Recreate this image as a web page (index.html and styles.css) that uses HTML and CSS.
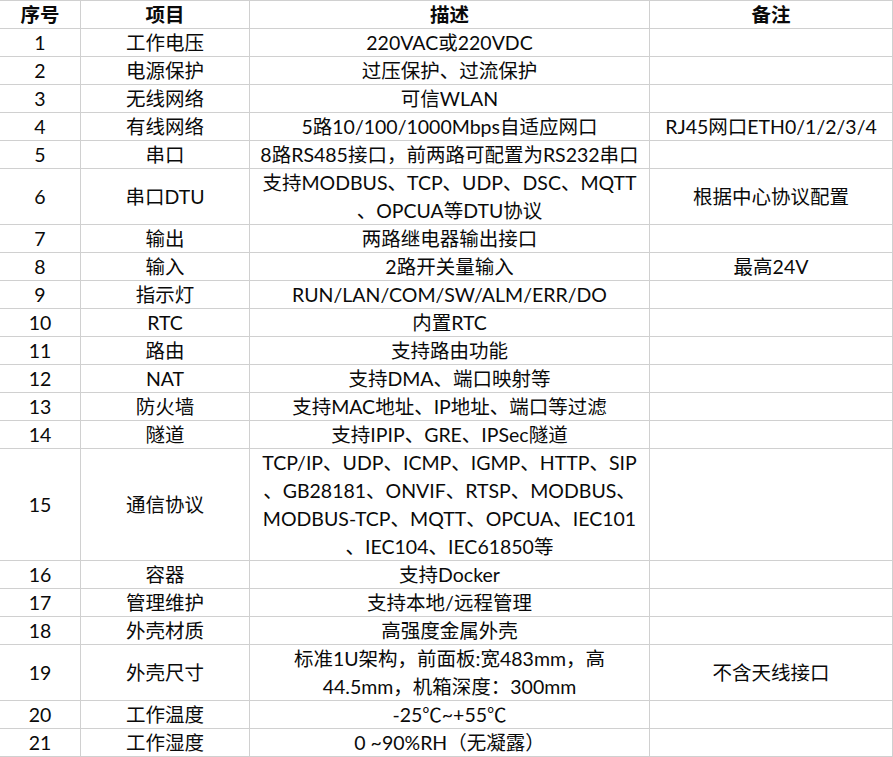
FILE: index.html
```html
<!DOCTYPE html>
<html lang="zh-CN">
<head>
<meta charset="utf-8">
<title>参数表</title>
<link rel="stylesheet" href="styles.css">
</head>
<body>
<div class="sheet">
  <div class="c hd">序号</div><div class="c hd">项目</div><div class="c hd">描述</div><div class="c hd">备注</div>

  <div class="c">1</div><div class="c">工作电压</div><div class="c">220VAC或220VDC</div><div class="c"></div>
  <div class="c">2</div><div class="c">电源保护</div><div class="c">过压保护、过流保护</div><div class="c"></div>
  <div class="c">3</div><div class="c">无线网络</div><div class="c">可信WLAN</div><div class="c"></div>
  <div class="c">4</div><div class="c">有线网络</div><div class="c">5路10/100/1000Mbps自适应网口</div><div class="c">RJ45网口ETH0/1/2/3/4</div>
  <div class="c">5</div><div class="c">串口</div><div class="c">8路RS485接口，前两路可配置为RS232串口</div><div class="c"></div>
  <div class="c r2">6</div><div class="c r2">串口DTU</div><div class="c r2"><span>支持MODBUS、TCP、UDP、DSC、MQTT<br>、OPCUA等DTU协议</span></div><div class="c r2">根据中心协议配置</div>
  <div class="c">7</div><div class="c">输出</div><div class="c">两路继电器输出接口</div><div class="c"></div>
  <div class="c">8</div><div class="c">输入</div><div class="c">2路开关量输入</div><div class="c">最高24V</div>
  <div class="c">9</div><div class="c">指示灯</div><div class="c">RUN/LAN/COM/SW/ALM/ERR/DO</div><div class="c"></div>
  <div class="c">10</div><div class="c">RTC</div><div class="c">内置RTC</div><div class="c"></div>
  <div class="c">11</div><div class="c">路由</div><div class="c">支持路由功能</div><div class="c"></div>
  <div class="c">12</div><div class="c">NAT</div><div class="c">支持DMA、端口映射等</div><div class="c"></div>
  <div class="c">13</div><div class="c">防火墙</div><div class="c">支持MAC地址、IP地址、端口等过滤</div><div class="c"></div>
  <div class="c">14</div><div class="c">隧道</div><div class="c">支持IPIP、GRE、IPSec隧道</div><div class="c"></div>
  <div class="c r4">15</div><div class="c r4">通信协议</div><div class="c r4"><span>TCP/IP、UDP、ICMP、IGMP、HTTP、SIP<br>、GB28181、ONVIF、RTSP、MODBUS、<br>MODBUS-TCP、MQTT、OPCUA、IEC101<br>、IEC104、IEC61850等</span></div><div class="c r4"></div>
  <div class="c">16</div><div class="c">容器</div><div class="c">支持Docker</div><div class="c"></div>
  <div class="c">17</div><div class="c">管理维护</div><div class="c">支持本地/远程管理</div><div class="c"></div>
  <div class="c">18</div><div class="c">外壳材质</div><div class="c">高强度金属外壳</div><div class="c"></div>
  <div class="c r2">19</div><div class="c r2">外壳尺寸</div><div class="c r2"><span>标准1U架构，前面板:宽483mm，高<br>44.5mm，机箱深度：300mm</span></div><div class="c r2">不含天线接口</div>
  <div class="c">20</div><div class="c">工作温度</div><div class="c">-25℃~+55℃</div><div class="c"></div>
  <div class="c">21</div><div class="c">工作湿度</div><div class="c">0 ~90%RH（无凝露）</div><div class="c"></div>
</div>
</body>
</html>
```

FILE: styles.css
```css
html, body {
  margin: 0;
  padding: 0;
  background: #ffffff;
}

.sheet {
  display: grid;
  grid-template-columns: 81px 169px 400px 243px;
  width: 893px;
  border-top: 1px solid #d0d0d0;
  font-family: "Lato", "Noto Sans CJK SC", sans-serif;
  font-size: 19.5px;
  color: #0a0a0a;
}

.c {
  box-sizing: border-box;
  height: 28px;
  border-right: 1px solid #d0d0d0;
  border-bottom: 1px solid #d0d0d0;
  display: flex;
  align-items: center;
  justify-content: center;
  text-align: center;
  line-height: 28px;
  white-space: nowrap;
}

.c.r2 { height: 56px; }
.c.r4 { height: 112px; }

.hd {
  font-weight: bold;
}
```
